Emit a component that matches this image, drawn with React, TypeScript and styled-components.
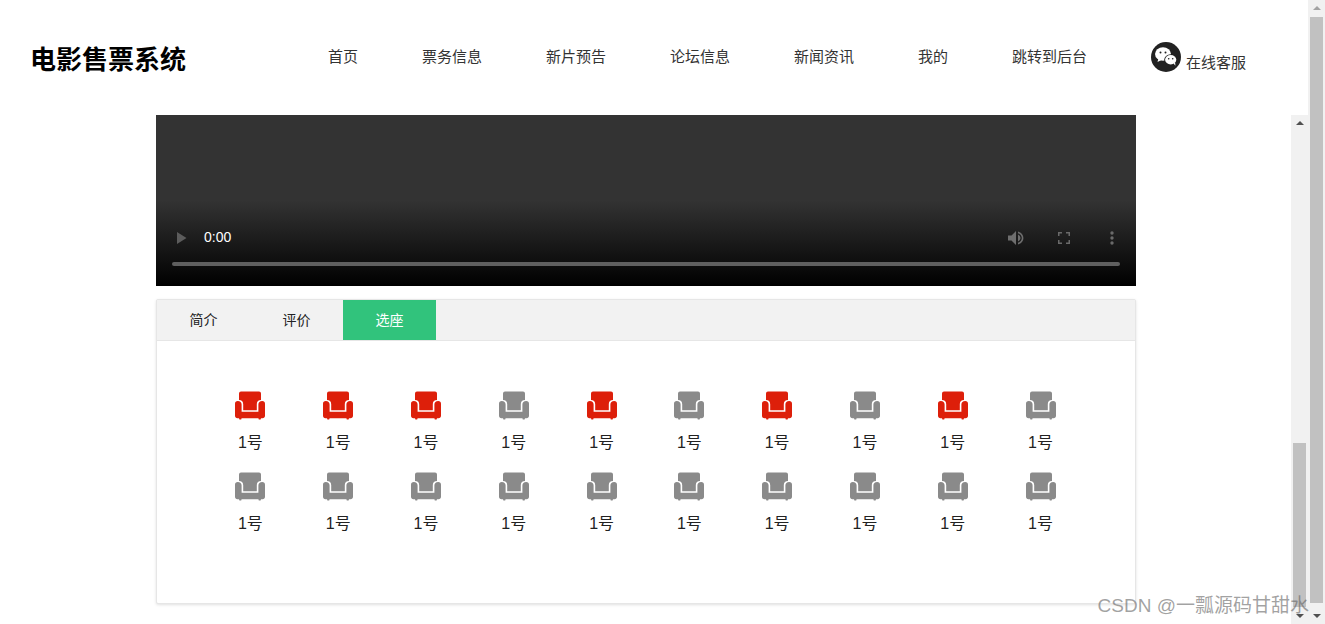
import React from "react";
import styled, { createGlobalStyle } from "styled-components";

const Global = createGlobalStyle`
  html, body { margin: 0; padding: 0; height: 100%; overflow: hidden; background: #fff; }
  body { font-family: "Liberation Sans", "Noto Sans CJK SC", sans-serif; }
  * { box-sizing: border-box; }
`;

const Page = styled.div`
  position: relative;
  width: 1325px;
  height: 624px;
  display: grid;
  grid-template-columns: 1fr 17px;
  background: #fff;
  overflow: hidden;
`;

const Main = styled.div`
  display: flex;
  flex-direction: column;
  min-width: 0;
`;

const Header = styled.header`
  height: 115px;
  display: flex;
  align-items: flex-start;
  color: #333;
`;

const Logo = styled.h1`
  margin: 42px 0 0 30px;
  width: 298px;
  font-size: 26px;
  line-height: 36px;
  font-weight: 700;
  color: #000;
  white-space: nowrap;
`;

const Nav = styled.nav`
  margin-top: 47px;
  display: flex;
  gap: 64px;
  font-size: 15px;
  line-height: 20px;
`;

const NavLink = styled.a`
  color: #333;
  white-space: nowrap;
`;

const Service = styled.div`
  margin: 42px 0 0 64px;
  display: flex;
  align-items: flex-end;
  gap: 5px;
  font-size: 15px;
  line-height: 20px;
  color: #333;
  white-space: nowrap;
`;

const ServiceLabel = styled.span`
  margin-bottom: -1px;
`;

const WeChatIcon = styled.svg`
  display: block;
  width: 30px;
  height: 30px;
`;

const ContentRow = styled.div`
  flex: 1;
  min-height: 0;
  display: grid;
  grid-template-columns: 1fr 17px;
`;

const Content = styled.main`
  padding-left: 156px;
`;

const Video = styled.div`
  position: relative;
  width: 980px;
  height: 171px;
  background: linear-gradient(to bottom, #333 0, #333 50%, #000 100%);
`;

const VideoControls = styled.div`
  position: absolute;
  left: 16px;
  right: 16px;
  bottom: 20px;
  display: flex;
  flex-direction: column;
  gap: 15px;
`;

const ControlRow = styled.div`
  display: flex;
  align-items: center;
  padding-right: 6px;
  color: #fff;
  font-size: 14px;
  line-height: 18px;
  height: 18px;
`;

const TimeText = styled.span`
  margin: 0 0 2px 17px;
  flex: 1;
`;

const ControlIcon = styled.svg<{ $ml?: number }>`
  display: block;
  flex: none;
  margin-left: ${(p) => p.$ml ?? 0}px;
`;

const Progress = styled.div`
  height: 4px;
  border-radius: 2px;
  background: #5f5f5f;
`;

const Card = styled.section`
  width: 980px;
  height: 305px;
  margin-top: 13px;
  background: #fff;
  border: 1px solid #e6e6e6;
  border-radius: 2px;
  box-shadow: 0 1px 3px rgba(0, 0, 0, 0.12);
`;

const TabBar = styled.div`
  height: 41px;
  display: flex;
  background: #f2f2f2;
  border-bottom: 1px solid #e6e6e6;
`;

const Tab = styled.div<{ $active?: boolean }>`
  width: 93px;
  padding-bottom: 2px;
  display: flex;
  align-items: center;
  justify-content: center;
  font-size: 14px;
  background: ${(p) => (p.$active ? "#31c37c" : "transparent")};
  color: ${(p) => (p.$active ? "#fff" : "#222")};
`;

const SeatGrid = styled.div`
  padding: 50px 0 0 49.5px;
  display: grid;
  grid-template-columns: repeat(10, 87.8px);
  row-gap: 20px;
`;

const Seat = styled.div`
  height: 61px;
  display: flex;
  flex-direction: column;
  align-items: center;
  font-size: 16px;
  color: #222;
`;

const SeatIcon = styled.svg`
  display: block;
  flex: none;
  width: 30px;
  height: 29px;
  margin-bottom: 14px;
`;

const SeatLabel = styled.span`
  line-height: 17px;
`;

const Scrollbar = styled.div<{ $top: number; $height: number }>`
  position: relative;
  background: #f1f1f1;
  height: 100%;
  overflow: hidden;

  &::before {
    content: "";
    position: absolute;
    left: 2px;
    right: 2px;
    top: ${(p) => p.$top}px;
    height: ${(p) => p.$height}px;
    background: #c1c1c1;
  }
`;

const Arrow = styled.i<{ $down?: boolean; $muted?: boolean }>`
  position: absolute;
  left: 5px;
  width: 0;
  height: 0;
  border-left: 4px solid transparent;
  border-right: 4px solid transparent;
  ${(p) =>
    p.$down
      ? `bottom: 6px; border-top: 4px solid ${p.$muted ? "#a3a3a3" : "#505050"};`
      : `top: 6px; border-bottom: 4px solid ${p.$muted ? "#a3a3a3" : "#505050"};`}
`;

const Watermark = styled.div`
  position: absolute;
  right: 16px;
  bottom: 6px;
  font-size: 19px;
  line-height: 24px;
  color: rgba(100, 100, 100, 0.6);
  white-space: nowrap;
`;

const navItems = ["首页", "票务信息", "新片预告", "论坛信息", "新闻资讯", "我的", "跳转到后台"];
const tabs = ["简介", "评价", "选座"];
const redSeats = [0, 1, 2, 4, 6, 8];
const seats = Array.from({ length: 20 }, (_, i) => i);

function Armchair({ color }: { color: string }) {
  return (
    <SeatIcon viewBox="0 0 30 29" aria-hidden="true">
      <path
        fill={color}
        d="M6 .5H24a2 2 0 0 1 2 2V9c-2.500 0-4.200 1.500-4.200 4V19.200H8.200V13C8.200 10.500 6.500 9 4 9V2.500a2 2 0 0 1 2-2z"
      />
      <path
        fill={color}
        d="M2.800 10C5.100 10 6.600 11.500 6.600 13.500V20.800H23.400V13.500C23.400 11.500 24.900 10 27.200 10 29 10 30 11 30 12.800V24.800C30 26.300 29 27.300 27.500 27.300H26l-.4 1.200h-1.800L23.400 27.300H6.600l-.4 1.200H4.400L4 27.300H2.500C1 27.300 0 26.300 0 24.800V12.800C0 11 1 10 2.800 10z"
      />
    </SeatIcon>
  );
}

function WeChat() {
  return (
    <WeChatIcon viewBox="0 0 30 30" aria-hidden="true">
      <circle cx="15" cy="15" r="15" fill="#222" />
      <ellipse cx="12" cy="12" rx="8" ry="6.800" fill="#fff" />
      <path d="M7.500 16l-1 4 4-2z" fill="#fff" />
      <ellipse cx="19.700" cy="17.800" rx="6.500" ry="5.500" fill="#222" />
      <ellipse cx="19.700" cy="17.800" rx="5.600" ry="4.700" fill="#fff" />
      <path d="M22.500 21.500l2 2.300-.4-3.300z" fill="#fff" />
      <circle cx="9.500" cy="10.500" r="1" fill="#222" />
      <circle cx="14.500" cy="10.500" r="1" fill="#222" />
      <circle cx="17.700" cy="16.800" r=".8" fill="#222" />
      <circle cx="21.700" cy="16.800" r=".8" fill="#222" />
    </WeChatIcon>
  );
}

export default function App() {
  return (
    <>
      <Global />
      <Page>
        <Main>
          <Header>
            <Logo>电影售票系统</Logo>
            <Nav>
              {navItems.map((n) => (
                <NavLink key={n}>{n}</NavLink>
              ))}
            </Nav>
            <Service>
              <WeChat />
              <ServiceLabel>在线客服</ServiceLabel>
            </Service>
          </Header>
          <ContentRow>
            <Content>
              <Video>
                <VideoControls>
                  <ControlRow>
                    <ControlIcon $ml={5} width="10" height="12" viewBox="0 0 10 12">
                      <path d="M0 0l9.500 6L0 12z" fill="#5c5c5c" />
                    </ControlIcon>
                    <TimeText>0:00</TimeText>
                    <ControlIcon width="18" height="18" viewBox="0 0 18 18">
                      <path d="M1 6.500v5h3.500L9 16V2L4.500 6.500zM11 5.500v7c1.500-.7 2.500-2 2.500-3.500S12.500 6.200 11 5.500z" fill="#6e6e6e" />
                      <path d="M11 2.500v1.700c2.200.7 3.800 2.600 3.800 4.800s-1.600 4.100-3.800 4.800v1.700c3.100-.8 5.400-3.400 5.400-6.500s-2.300-5.700-5.400-6.500z" fill="#6e6e6e" />
                    </ControlIcon>
                    <ControlIcon $ml={33} width="12" height="12" viewBox="0 0 12 12">
                      <path d="M0 4V0h4v1.500H1.500V4zM8 0h4v4h-1.500V1.500H8zM12 8v4H8v-1.500h2.500V8zM4 12H0V8h1.500v2.500H4z" fill="#6a6a6a" />
                    </ControlIcon>
                    <ControlIcon $ml={40} width="4" height="14" viewBox="0 0 4 14">
                      <circle cx="2" cy="2" r="1.700" fill="#6a6a6a" />
                      <circle cx="2" cy="7" r="1.700" fill="#6a6a6a" />
                      <circle cx="2" cy="12" r="1.700" fill="#6a6a6a" />
                    </ControlIcon>
                  </ControlRow>
                  <Progress />
                </VideoControls>
              </Video>
              <Card>
                <TabBar>
                  {tabs.map((t, i) => (
                    <Tab key={t} $active={i === 2}>
                      {t}
                    </Tab>
                  ))}
                </TabBar>
                <SeatGrid>
                  {seats.map((i) => (
                    <Seat key={i}>
                      <Armchair color={redSeats.includes(i) ? "#dd1f0a" : "#8a8a8a"} />
                      <SeatLabel>1号</SeatLabel>
                    </Seat>
                  ))}
                </SeatGrid>
              </Card>
            </Content>
            <Scrollbar $top={328} $height={164}>
              <Arrow />
              <Arrow $down />
            </Scrollbar>
          </ContentRow>
        </Main>
        <Scrollbar $top={17} $height={586}>
          <Arrow $muted />
          <Arrow $down />
        </Scrollbar>
        <Watermark>CSDN @一瓢源码甘甜水</Watermark>
      </Page>
    </>
  );
}
